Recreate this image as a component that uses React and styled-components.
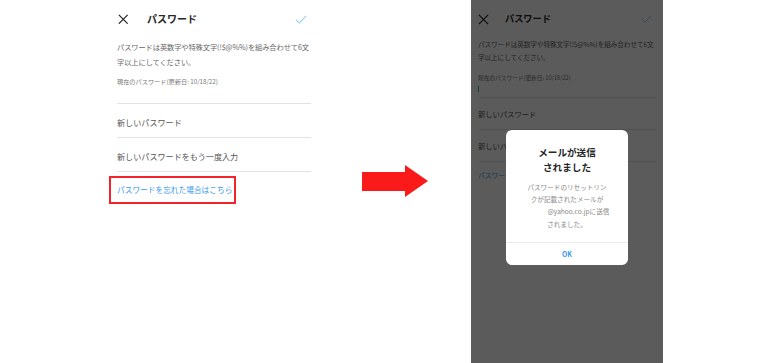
import React from "react";
import styled, { createGlobalStyle } from "styled-components";

const Global = createGlobalStyle`
  html, body { margin: 0; padding: 0; background: #ffffff; }
  body { width: 768px; height: 363px; overflow: hidden; font-family: "Noto Sans CJK JP", "Noto Sans", sans-serif; }
  * { box-sizing: border-box; }
`;

const Page = styled.div`
  display: flex;
  align-items: flex-start;
  width: 768px;
  height: 363px;
  padding-left: 109px;
`;

/* ---------- left screen ---------- */
const LeftScreen = styled.div`
  width: 202px;
  padding-left: 8px;
  display: flex;
  flex-direction: column;
`;

const Header = styled.div`
  display: flex;
  align-items: center;
  height: ${(p) => p.$h}px;
  padding-left: ${(p) => p.$pl}px;
  padding-right: ${(p) => p.$pr}px;
`;

const Title = styled.div`
  font-size: ${(p) => p.$size}px;
  font-weight: 700;
  color: #262626;
  margin-left: ${(p) => p.$ml}px;
  flex: 1;
  line-height: 1;
`;

const Desc = styled.div`
  font-size: ${(p) => p.$size}px;
  line-height: ${(p) => p.$lh}px;
  color: #666666;
  padding-top: ${(p) => p.$pt}px;
  letter-spacing: -0.1px;
  white-space: nowrap;
`;

const Field = styled.div`
  display: flex;
  flex-direction: column;
  align-items: flex-start;
  border-bottom: 1px solid #e3e3e3;
  padding-top: ${(p) => p.$pt}px;
  height: ${(p) => p.$h}px;
`;

const FieldLabel = styled.div`
  font-size: ${(p) => p.$size}px;
  line-height: ${(p) => p.$lh}px;
  color: #777777;
  white-space: nowrap;
`;

const Cursor = styled.div`
  width: 1px;
  height: 6px;
  margin-top: 4px;
  background: #38b28e;
`;

const Row = styled.div`
  font-size: ${(p) => p.$size}px;
  line-height: ${(p) => p.$lh}px;
  padding-top: ${(p) => p.$pt}px;
  padding-bottom: ${(p) => p.$pb}px;
  color: #555555;
  border-bottom: 1px solid #e3e3e3;
  white-space: nowrap;
`;

const Highlight = styled.div`
  margin-top: 4px;
  margin-left: -8px;
  width: 127px;
  height: 28px;
  border: 2px solid #f2232b;
  padding: 6px 0 0 6px;
`;

const LinkText = styled.div`
  font-size: ${(p) => p.$size}px;
  line-height: ${(p) => p.$lh}px;
  padding-top: ${(p) => p.$pt || 0}px;
  color: #3897f0;
  white-space: nowrap;
`;

/* ---------- arrow ---------- */
const ArrowWrap = styled.div`
  margin-left: 51px;
  margin-top: 165px;
  width: 66px;
  height: 32px;
  display: flex;
`;

/* ---------- right phone ---------- */
const Phone = styled.div`
  position: relative;
  margin-left: 43px;
  width: 192px;
  height: 363px;
  background: #ffffff;
  padding: 0 7px;
  display: flex;
  flex-direction: column;
  overflow: hidden;
`;

const Dim = styled.div`
  position: absolute;
  inset: 0;
  background: rgba(0, 0, 0, 0.645);
`;

const Modal = styled.div`
  position: absolute;
  left: 35px;
  top: 130px;
  width: 122px;
  height: 135px;
  background: #ffffff;
  border-radius: 6px;
  display: flex;
  flex-direction: column;
  align-items: center;
  text-align: center;
`;

const ModalTitle = styled.div`
  font-size: 9.6px;
  line-height: 15.5px;
  font-weight: 700;
  color: #262626;
  padding-top: 14.5px;
`;

const ModalBody = styled.div`
  font-size: 6.6px;
  line-height: 12.2px;
  color: #8a8a8a;
  margin-top: 5.5px;
  white-space: nowrap;
  flex: 1;
`;

const Blank = styled.span`
  display: inline-block;
  width: 23px;
`;

const ModalFooter = styled.div`
  width: 100%;
  height: 23px;
  border-top: 1px solid #ececec;
  display: flex;
  align-items: center;
  justify-content: center;
  font-size: 6.8px;
  font-weight: 700;
  color: #3897f0;
`;

const CloseIcon = ({ size }) => (
  <svg width={size} height={size} viewBox="0 0 10 10">
    <path d="M0.8 0.8 L9.2 9.2 M9.2 0.8 L0.8 9.2" stroke="#262626" strokeWidth="1.15" fill="none" />
  </svg>
);

const CheckIcon = ({ w, h }) => (
  <svg width={w} height={h} viewBox="0 0 12 9">
    <path d="M0.8 4.6 L4.3 8 L11.2 0.8" stroke="#9ccff3" strokeWidth="1.1" fill="none" />
  </svg>
);

const Screen = ({ right }) => {
  const s = right
    ? { h: 38, pl: 0, pr: 4, x: 11, tml: 16, ts: 9.2, cw: 11, ch: 8, ds: 6.65, dlh: 13, dpt: 0, fpt: 8.5, fs: 5.7, flh: 9, rs: 7.3, rlh: 11, rpt: 11.5, rpb: 8.5, ls: 6.8 }
    : { h: 38, pl: 1, pr: 4, x: 10.5, tml: 18.5, ts: 10, cw: 12, ch: 9, ds: 7.25, dlh: 15, dpt: 2, fpt: 7, fs: 6.2, flh: 10, rs: 8.1, rlh: 12, rpt: 13, rpb: 8, ls: 7.7 };
  return (
    <>
      <Header $h={s.h} $pl={s.pl} $pr={s.pr}>
        <CloseIcon size={s.x} />
        <Title $size={s.ts} $ml={s.tml}>パスワード</Title>
        <CheckIcon w={s.cw} h={s.ch} />
      </Header>
      <Desc $size={s.ds} $lh={s.dlh} $pt={s.dpt}>
        パスワードは英数字や特殊文字(!$@%%)を組み合わせて6文
        <br />
        字以上にしてください。
      </Desc>
      <Field $pt={s.fpt} $h={right ? 33.5 : 34}>
        <FieldLabel $size={s.fs} $lh={s.flh}>現在のパスワード(更新日: 10/18/22)</FieldLabel>
        {right && <Cursor />}
      </Field>
      <Row $size={s.rs} $lh={s.rlh} $pt={s.rpt} $pb={s.rpb}>新しいパスワード</Row>
      <Row $size={s.rs} $lh={s.rlh} $pt={s.rpt} $pb={s.rpb}>新しいパスワードをもう一度入力</Row>
      {right ? (
        <LinkText $size={s.ls} $lh={11} $pt={8}>パスワードを忘れた場合はこちら</LinkText>
      ) : (
        <Highlight>
          <LinkText $size={s.ls} $lh={12}>パスワードを忘れた場合はこちら</LinkText>
        </Highlight>
      )}
    </>
  );
};

export default function App() {
  return (
    <>
      <Global />
      <Page>
        <LeftScreen>
          <Screen />
        </LeftScreen>
        <ArrowWrap>
          <svg width="66" height="32" viewBox="0 0 66 32">
            <polygon points="0,7 43,7 43,0 66,16 43,32 43,26 0,26" fill="#fb1a1a" />
          </svg>
        </ArrowWrap>
        <Phone>
          <Screen right />
          <Dim />
          <Modal>
            <ModalTitle>
              メールが送信
              <br />
              されました
            </ModalTitle>
            <ModalBody>
              パスワードのリセットリン
              <br />
              クが記載されたメールが
              <br />
              <Blank />@yahoo.co.jpに送信
              <br />
              されました。
            </ModalBody>
            <ModalFooter>OK</ModalFooter>
          </Modal>
        </Phone>
      </Page>
    </>
  );
}
